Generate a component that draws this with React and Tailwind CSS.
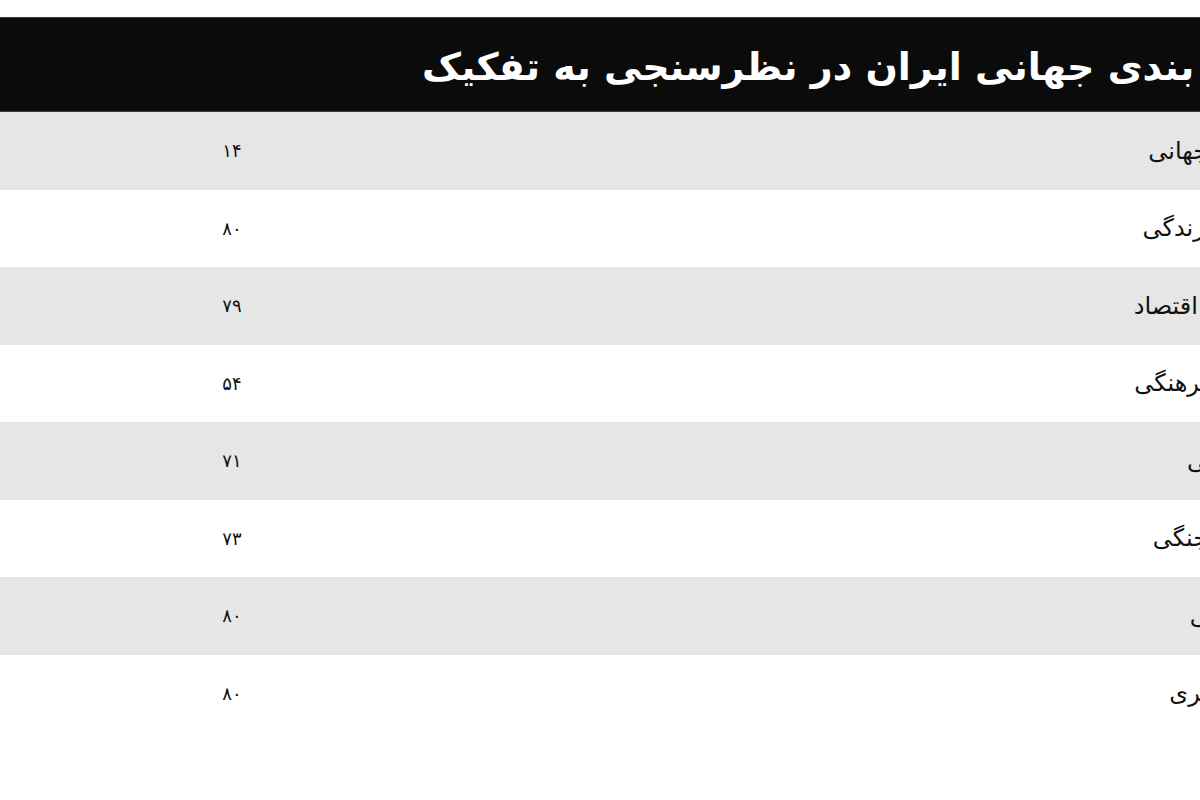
import React from 'react';

const rows = [
  { label: 'قدرت جهانی', value: '۱۴' },
  { label: 'کیفیت زندگی', value: '۸۰' },
  { label: 'ساختار اقتصاد', value: '۷۹' },
  { label: 'اعتبار فرهنگی', value: '۵۴' },
  { label: 'هماهنگی', value: '۷۱' },
  { label: 'قدرت جنگی', value: '۷۳' },
  { label: 'اجتماعی', value: '۸۰' },
  { label: 'رتبه برتری', value: '۸۰' },
];

const App = () => {
  return (
    <div className="w-[1200px] h-[800px] bg-white overflow-hidden font-['DejaVu_Sans',sans-serif]">
      <div className="w-[1300px] pt-[17px]">
        <div className="h-[95px] bg-[#0b0b0b] border-y border-[#3c3c3c] flex items-center pl-[422px]">
          <h1 dir="rtl" className="text-white text-[38px] leading-none font-bold whitespace-nowrap pt-[5px]">
            رتبه بندی جهانی ایران در نظرسنجی به تفکیک
          </h1>
        </div>

        <div>
          {rows.map((row, i) => (
            <div
              key={i}
              className={`h-[77.5px] flex items-center ${i % 2 === 0 ? 'bg-[#e6e6e6]' : 'bg-white'}`}
            >
              <div className="w-[80px] ml-[192px] text-center text-[18px] text-[#111]">{row.value}</div>
              <div dir="rtl" className="flex-1 pr-[26px] text-right text-[24px] text-[#111] whitespace-nowrap">
                {row.label}
              </div>
            </div>
          ))}
        </div>
      </div>
    </div>
  );
};

export default App;
